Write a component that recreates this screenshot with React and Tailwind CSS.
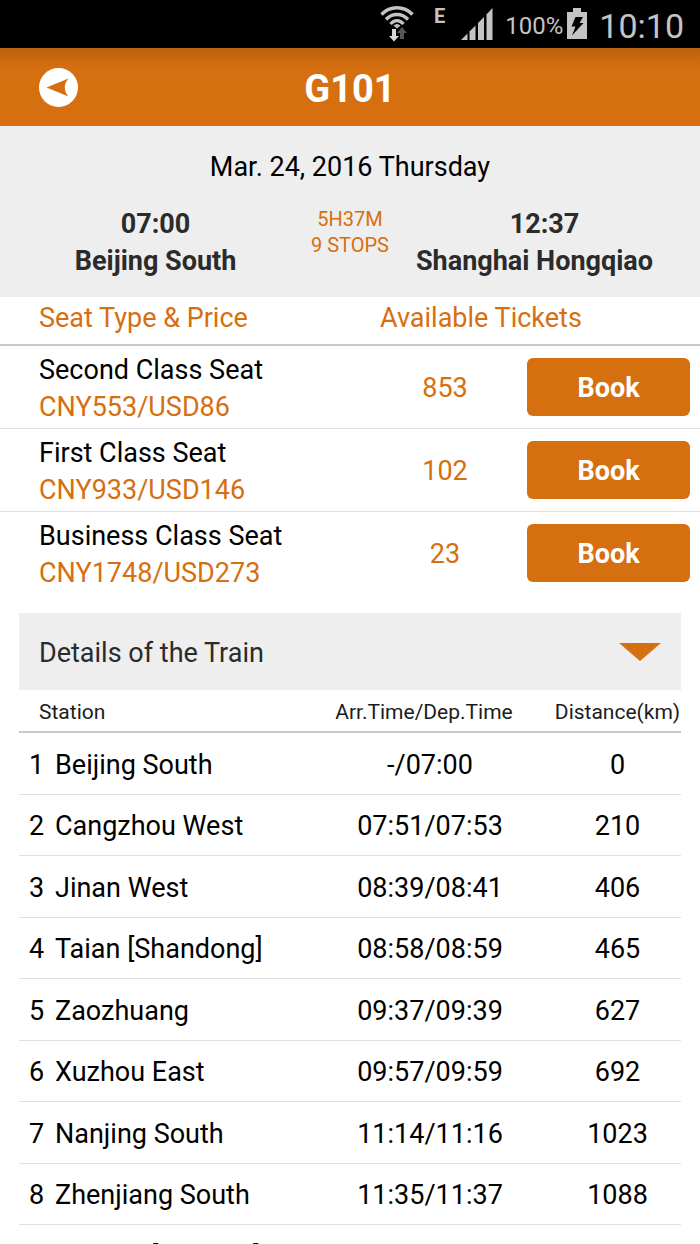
import React from 'react'

const seats = [
  { name: "Second Class Seat", price: "CNY553/USD86", tickets: 853 },
  { name: "First Class Seat", price: "CNY933/USD146", tickets: 102 },
  { name: "Business Class Seat", price: "CNY1748/USD273", tickets: 23 },
];

const stations = [
  { name: "Beijing South", time: "-/07:00", distance: "0" },
  { name: "Cangzhou West", time: "07:51/07:53", distance: "210" },
  { name: "Jinan West", time: "08:39/08:41", distance: "406" },
  { name: "Taian [Shandong]", time: "08:58/08:59", distance: "465" },
  { name: "Zaozhuang", time: "09:37/09:39", distance: "627" },
  { name: "Xuzhou East", time: "09:57/09:59", distance: "692" },
  { name: "Nanjing South", time: "11:14/11:16", distance: "1023" },
  { name: "Zhenjiang South", time: "11:35/11:37", distance: "1088" },
  { name: "Suzhou [Jiangsu]", time: "-", distance: "-" },
];

const WifiIcon = () => (
  <svg width="34" height="36" viewBox="0 0 34 36" fill="none" stroke="#c4c4c4">
    <path d="M1.500 8.500C10-.5 24-.5 32.500 8.500" strokeWidth="3.400" />
    <path d="M6 13.500C12 6.800 22 6.800 28 13.500" strokeWidth="3.400" />
    <path d="M10.500 18C14.500 13.500 19.500 13.500 23.500 18" strokeWidth="3.200" />
    <path d="M13.500 19.500Q17 16.500 20.500 19.500L17 22.500Z" fill="#c4c4c4" stroke="none" />
    <path d="M12 23h4v7h3l-5 5.500l-5-5.500h3z" fill="#d6d6d6" stroke="none" />
    <path d="M20 33h4v-6h3l-5-6l-5 6h3z" fill="#555" stroke="none" />
  </svg>
)

const SignalIcon = () => (
  <svg width="32" height="32" viewBox="0 0 32 32" fill="#c4c4c4">
    <path d="M0 32L6.500 25.500V32Z" />
    <path d="M8.500 23.500L14.500 17.500V32H8.500Z" />
    <path d="M17 15L23 9V32H17Z" />
    <path d="M25.500 6.500L31.500 0V32H25.500Z" />
  </svg>
)

const BatteryIcon = () => (
  <svg width="20" height="32" viewBox="0 0 20 32">
    <path d="M6 0h8v4h6v27H0V4h6z" fill="#c4c4c4" />
    <path d="M8.500 9H16L12.500 15H16.500L5 27.500L8.500 18.500H4.500Z" fill="#000" />
  </svg>
)

const StatusBar = () => (
  <div className="flex h-12 items-center justify-end bg-black pr-4 text-[#c4c4c4]">
    <WifiIcon />
    <span className="ml-5 mb-4 text-xl leading-none font-bold">E</span>
    <div className="ml-4"><SignalIcon /></div>
    <span className="ml-3 mr-1 pt-1 text-2xl">100%</span>
    <BatteryIcon />
    <span className="ml-3 pt-1 text-[34px]">10:10</span>
  </div>
)

const Header = () => (
  <header className="grid h-[78px] grid-cols-[1fr_auto_1fr] items-center bg-linear-to-b from-[#bd6010] to-[#d66f10] to-25% px-[39px]">
    <button type="button" aria-label="Back" className="w-10">
      <svg width="39" height="39" viewBox="0 0 39 39">
        <circle cx="19.500" cy="19.500" r="19.500" fill="#fff" />
        <path d="M7.500 19.500L29.500 10.500C24.500 16 24.500 23 29.500 28.500Z" fill="#d66f10" />
      </svg>
    </button>
    <h1 className="pt-1 text-[38px] font-bold text-white">G101</h1>
  </header>
)

const Summary = () => (
  <section className="bg-[#eeeeee] pt-5 pb-[17px]">
    <p className="text-center leading-[42px]">Mar. 24, 2016 Thursday</p>
    <div className="mt-[18px] grid grid-cols-[311fr_78fr_311fr] text-center">
      <div className="font-bold leading-[37px] text-[#2b2b2b]">
        <p>07:00</p>
        <p>Beijing South</p>
      </div>
      <div className="text-xl leading-[26px] whitespace-nowrap text-[#d66f10]">
        <p>5H37M</p>
        <p>9 STOPS</p>
      </div>
      <div className="font-bold leading-[37px] text-[#2b2b2b]">
        <p>12:37</p>
        <p className="pr-5">Shanghai Hongqiao</p>
      </div>
    </div>
  </section>
)

const Seats = () => (
  <section>
    <div className="flex h-[49px] border-b-2 border-[#c8c8c8] pl-[39px] leading-[42px] text-[#d66f10]">
      <h2 className="w-[341px]">Seat Type &amp; Price</h2>
      <h2>Available Tickets</h2>
    </div>
    {seats.map((seat) => (
      <div key={seat.name} className="flex h-[83px] items-center border-b border-[#e0e0e0] pr-[10px] pl-[39px] last:border-transparent">
        <div className="flex-1 pt-1 leading-[37px]">
          <p>{seat.name}</p>
          <p className="text-[#d66f10]">{seat.price}</p>
        </div>
        <p className="w-[164px] pt-0.5 text-center text-[#d66f10]">{seat.tickets}</p>
        <button type="button" className="h-[58px] w-[163px] rounded-md bg-[#d66f10] pt-0.5 font-bold text-white">
          Book
        </button>
      </div>
    ))}
  </section>
)

const Details = () => (
  <section className="mx-[19px] mt-[18px]">
    <button type="button" aria-expanded="true" className="flex h-[77px] w-full items-center justify-between bg-[#eeeeee] px-5 text-[#2b2b2b]">
      <span className="pt-1">Details of the Train</span>
      <svg width="42" height="18" viewBox="0 0 42 18">
        <path d="M0 0H42L21 18Z" fill="#d66f10" />
      </svg>
    </button>
    <table className="w-full table-fixed border-collapse text-center">
      <thead>
        <tr className="h-[42px] border-b-2 border-[#c8c8c8] text-[21px] whitespace-nowrap text-[#1c1c1c]">
          <th className="pt-1 pl-5 text-left font-normal">Station</th>
          <th className="w-[248px] pt-1 pr-3 font-normal">Arr.Time/Dep.Time</th>
          <th className="w-[127px] pt-1 font-normal">Distance(km)</th>
        </tr>
      </thead>
      <tbody>
        {stations.map((station, index) => (
          <tr key={index} className="h-[62px] border-b border-[#e0e0e0] even:h-[61px]">
            <td className="pt-1 pl-[10px] text-left whitespace-nowrap">
              <span className="inline-block w-[26px]">{index + 1}</span>
              {station.name}
            </td>
            <td className="pt-1">{station.time}</td>
            <td className="pt-1">{station.distance}</td>
          </tr>
        ))}
      </tbody>
    </table>
  </section>
)

const App = () => {
  return (
    <div className="h-screen overflow-hidden bg-white font-[Roboto,sans-serif] text-[27px] text-black">
      <StatusBar />
      <Header />
      <Summary />
      <Seats />
      <Details />
    </div>
  );
}

export default App
